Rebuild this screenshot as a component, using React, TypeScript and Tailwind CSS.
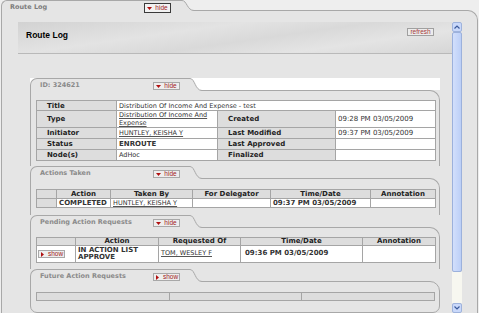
import React from 'react';

const bd = 'border border-[#a5a5a5]';
const lab = `${bd} bg-[#dddddd] p-0 pl-[10px] text-left align-middle text-[7px] font-bold text-[#222]`;
const val = `${bd} bg-white p-0 pl-[2px] text-left align-middle text-[6.5px] text-[#333]`;
const head = `${bd} bg-[#dddddd] p-0 text-center align-middle text-[7px] font-bold text-[#222]`;
const link = 'underline decoration-[#555]';

const Tri = ({ dir }: { dir: 'down' | 'right' }) => (
  <svg width="5" height="5" viewBox="0 0 5 5" className="block shrink-0">
    {dir === 'down' ? <path d="M0 1h5L2.5 4z" fill="#b01010" /> : <path d="M1 0v5L4 2.5z" fill="#b01010" />}
  </svg>
);

const ToggleBtn = ({ label, dark }: { label: 'hide' | 'show'; dark?: boolean }) => (
  <span
    className={
      dark
        ? "flex h-[10px] w-[27px] items-center justify-center gap-[3px] border border-[#3a3a3a] bg-[#f2f2f2] font-['Liberation_Sans',sans-serif] text-[6.5px] leading-none text-[#a02020]"
        : "flex h-[8px] w-[27px] items-center justify-center gap-[3px] border border-[#a8a8a8] bg-[#eeeeee] font-['Liberation_Sans',sans-serif] text-[6.5px] leading-none text-[#a02020]"
    }
  >
    <Tri dir={label === 'hide' ? 'down' : 'right'} />
    {label}
  </span>
);

// the sloped right edge of a folder tab
const Slope = ({ h }: { h: number }) => (
  <svg width="12" height={h + 1} viewBox={`0 0 12 ${h + 1}`} className="relative z-10 -mb-px block shrink-0">
    <path d={`M0 0.5C5 0.5 5 ${h + 0.5} 12 ${h + 0.5}V${h + 1}H0Z`} fill="#e5e5e5" />
    <path d={`M0 0.5C5 0.5 5 ${h + 0.5} 12 ${h + 0.5}`} fill="none" stroke="#a8a8a8" />
  </svg>
);

interface SectionProps {
  title: string;
  btn: 'hide' | 'show';
  headBg: string;
  bodyCls: string;
  children: React.ReactNode;
}

const Section = ({ title, btn, headBg, bodyCls, children }: SectionProps) => (
  <div>
    <div className={`flex h-[12px] items-end ${headBg}`}>
      <div className="relative z-10 -mb-px flex h-[13px] w-[160px] shrink-0 items-start rounded-tl-[7px] border-l border-t border-[#a8a8a8] bg-[#e5e5e5] pl-[9px]">
        <span className="mt-[3px] w-[113px] text-[6.5px] font-bold leading-[7px] text-[#8a8a8a]">{title}</span>
        <span className="mt-[3px]">
          <ToggleBtn label={btn} />
        </span>
      </div>
      <Slope h={12} />
      <div className="flex-1" />
    </div>
    <div className={`border-l border-r border-t border-[#a8a8a8] bg-[#e5e5e5] pl-[5px] ${bodyCls}`}>{children}</div>
  </div>
);

const Chevron = ({ up }: { up?: boolean }) => (
  <svg width="6" height="4" viewBox="0 0 6 4" className="block">
    <path d={up ? 'M0.5 3.5L3 1L5.5 3.5' : 'M0.5 0.5L3 3L5.5 0.5'} fill="none" stroke="#3a5a9a" strokeWidth="1.2" />
  </svg>
);

const Scrollbar = () => (
  <div className="flex h-[291px] w-[10px] shrink-0 flex-col">
    <div className="flex h-[10px] items-center justify-center rounded-[2px] border border-[#9fb3dc] bg-[#c9d8fa]">
      <Chevron up />
    </div>
    <div className="h-[240px] rounded-[2px] border border-[#9cb1dc] bg-[linear-gradient(90deg,#d2dffc,#bccff7)]" />
    <div className="flex-1 bg-[#f7f7f0]" />
    <div className="flex h-[10px] items-center justify-center rounded-[2px] border border-[#9fb3dc] bg-[#c9d8fa]">
      <Chevron />
    </div>
  </div>
);

export default function App() {
  return (
    <div className="h-[313px] w-[479px] overflow-hidden bg-[#eeeeee] font-['DejaVu_Sans',sans-serif]">
      {/* outer tab */}
      <div className="flex h-[10px] items-end pl-px">
        <div className="relative z-10 -mb-px flex h-[11px] w-[181px] shrink-0 items-start rounded-tl-[6px] border-l border-t border-[#a8a8a8] bg-[#e5e5e5] pl-[8px]">
          <span className="mt-[3px] w-[134px] text-[6.5px] font-bold leading-[7px] text-[#7c7c7c]">Route Log</span>
          <span className="mt-[2px]">
            <ToggleBtn label="hide" dark />
          </span>
        </div>
        <Slope h={10} />
        <div className="flex-1" />
      </div>

      <div className="ml-px flex h-[303px] w-[477px] rounded-tr-[10px] border-l border-r border-t border-[#a8a8a8] bg-[#e5e5e5] pl-[16px] pt-[11px]">
        <div className="w-[434px]">
          {/* header bar */}
          <div className="flex h-[32px] items-start justify-between border-b border-[#b9b9b9] bg-[linear-gradient(172deg,#d2d2d2_0%,#e3e3e3_35%,#d9d9d9_55%,#e4e4e4_75%,#d6d6d6_100%)] pl-[8px] pr-[18px]">
            <span className="mt-[8px] font-['Liberation_Sans',sans-serif] text-[8.5px] font-bold leading-[10px] text-black">Route Log</span>
            <span className="mt-[6px] flex h-[8px] w-[27px] items-center justify-center border border-[#a0a0a0] bg-[#ececec] font-['Liberation_Sans',sans-serif] text-[6.5px] leading-none text-[#a53a3a]">
              refresh
            </span>
          </div>

          <div className="ml-[12px] mt-[24px] w-[410px]">
            <Section title="ID: 324621" btn="hide" headBg="bg-white" bodyCls="rounded-tr-[10px] pt-[9px] pb-[5px]">
              <table className="w-[399px] table-fixed border-collapse leading-[8px]">
                <colgroup>
                  <col className="w-[80px]" />
                  <col className="w-[101px]" />
                  <col className="w-[118px]" />
                  <col className="w-[100px]" />
                </colgroup>
                <tbody>
                  <tr className="h-[10px]">
                    <th className={lab}>Title</th>
                    <td className={val} colSpan={3}>Distribution Of Income And Expense - test</td>
                  </tr>
                  <tr className="h-[17px]">
                    <th className={lab}>Type</th>
                    <td className={val}><span className={link}>Distribution Of Income And Expense</span></td>
                    <th className={lab}>Created</th>
                    <td className={`${val} text-[7px]`}>09:28 PM 03/05/2009</td>
                  </tr>
                  <tr className="h-[11px]">
                    <th className={lab}>Initiator</th>
                    <td className={val}><span className={link}>HUNTLEY, KEISHA Y</span></td>
                    <th className={lab}>Last Modified</th>
                    <td className={`${val} text-[7px]`}>09:37 PM 03/05/2009</td>
                  </tr>
                  <tr className="h-[11px]">
                    <th className={lab}>Status</th>
                    <td className={`${val} font-bold text-[7px] text-[#222]`}>ENROUTE</td>
                    <th className={lab}>Last Approved</th>
                    <td className={val}></td>
                  </tr>
                  <tr className="h-[11px]">
                    <th className={lab}>Node(s)</th>
                    <td className={val}>AdHoc</td>
                    <th className={lab}>Finalized</th>
                    <td className={val}></td>
                  </tr>
                </tbody>
              </table>
            </Section>

            <Section title="Actions Taken" btn="hide" headBg="" bodyCls="rounded-tr-[10px] pt-[10px] pb-[7px]">
              <table className="w-[399px] table-fixed border-collapse leading-[8px]">
                <colgroup>
                  <col className="w-[20px]" />
                  <col className="w-[54px]" />
                  <col className="w-[82px]" />
                  <col className="w-[78px]" />
                  <col className="w-[100px]" />
                  <col className="w-[65px]" />
                </colgroup>
                <tbody>
                  <tr className="h-[9px]">
                    <th className={head}></th>
                    <th className={head}>Action</th>
                    <th className={head}>Taken By</th>
                    <th className={head}>For Delegator</th>
                    <th className={head}>Time/Date</th>
                    <th className={head}>Annotation</th>
                  </tr>
                  <tr className="h-[9px]">
                    <td className={`${bd} bg-[#dddddd] p-0`}></td>
                    <td className={`${val} font-bold text-[7px] text-[#222]`}>COMPLETED</td>
                    <td className={val}><span className={link}>HUNTLEY, KEISHA Y</span></td>
                    <td className={val}></td>
                    <td className={`${val} font-bold text-[7px] text-[#222]`}>09:37 PM 03/05/2009</td>
                    <td className={val}></td>
                  </tr>
                </tbody>
              </table>
            </Section>

            <Section title="Pending Action Requests" btn="hide" headBg="" bodyCls="rounded-tr-[10px] pt-[9px] pb-[6px]">
              <table className="w-[399px] table-fixed border-collapse">
                <colgroup>
                  <col className="w-[39px]" />
                  <col className="w-[83px]" />
                  <col className="w-[82px]" />
                  <col className="w-[122px]" />
                  <col className="w-[73px]" />
                </colgroup>
                <tbody>
                  <tr className="h-[8px] leading-[7px]">
                    <th className={head}></th>
                    <th className={head}>Action</th>
                    <th className={head}>Requested Of</th>
                    <th className={head}>Time/Date</th>
                    <th className={head}>Annotation</th>
                  </tr>
                  <tr className="h-[17px] leading-[7.5px]">
                    <td className={`${bd} bg-white p-0 pl-px align-middle`}>
                      <ToggleBtn label="show" />
                    </td>
                    <td className={`${val} font-bold text-[7px] text-[#222]`}>
                      IN ACTION LIST
                      <br />
                      APPROVE
                    </td>
                    <td className={val}><span className={link}>TOM, WESLEY F</span></td>
                    <td className={`${val} pl-[4px] font-bold text-[7px] text-[#222]`}>09:36 PM 03/05/2009</td>
                    <td className={val}></td>
                  </tr>
                </tbody>
              </table>
            </Section>

            <Section title="Future Action Requests" btn="show" headBg="" bodyCls="h-[32px] rounded-tr-[10px] rounded-b-[7px] border-b pt-[10px]">
              <table className="w-[399px] table-fixed border-collapse">
                <tbody>
                  <tr>
                    <td className={`${bd} h-[8px] bg-[#dddddd] p-0`}></td>
                    <td className={`${bd} h-[8px] bg-[#dddddd] p-0`}></td>
                    <td className={`${bd} h-[8px] bg-[#dddddd] p-0`}></td>
                  </tr>
                </tbody>
              </table>
            </Section>
          </div>
        </div>
        <Scrollbar />
      </div>
    </div>
  );
}
